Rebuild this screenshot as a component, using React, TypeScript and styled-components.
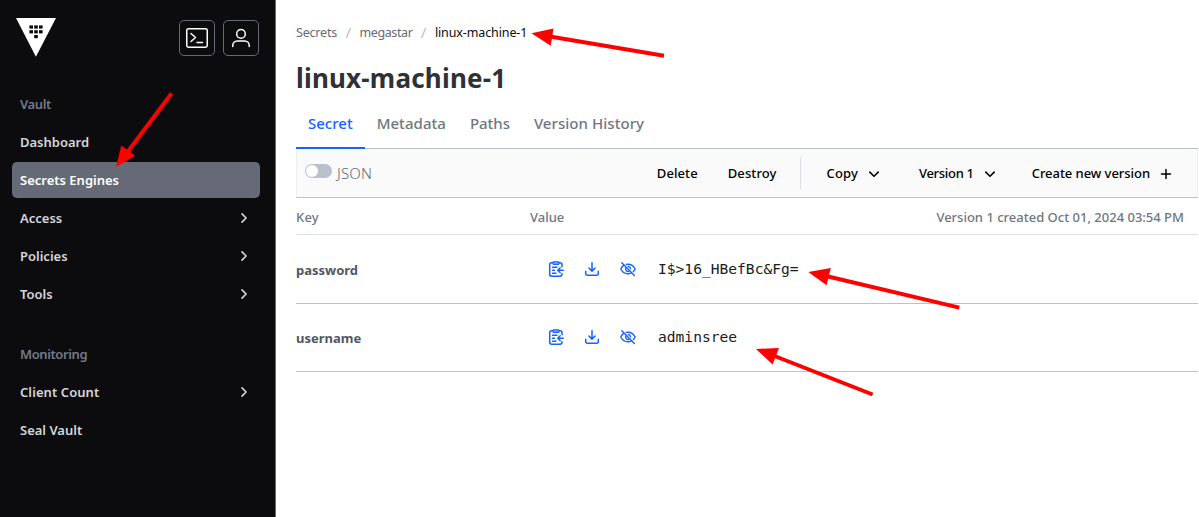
import React from "react";
import styled, { createGlobalStyle } from "styled-components";

const GlobalStyle = createGlobalStyle`
  * { box-sizing: border-box; }
  body {
    margin: 0;
    background: #fff;
    overflow: hidden;
    font-family: "Noto Sans", "Open Sans", sans-serif;
  }
  svg { display: block; flex: none; }
`;

const Page = styled.div`
  display: flex;
  position: relative;
  width: 1199px;
  height: 517px;
  white-space: nowrap;
`;

const Sidebar = styled.nav`
  width: 276px;
  height: 100%;
  padding: 0 15px 0 12px;
  background: #0c0c0e;
  border-right: 1px solid #656a76;
`;

const SidebarHeader = styled.div`
  display: flex;
  align-items: flex-start;
  gap: 8px;
  height: 86px;
  padding: 18px 1px 0 4px;
`;

const Logo = styled.svg`
  margin-right: auto;
`;

const HeaderButton = styled.button`
  display: flex;
  align-items: center;
  justify-content: center;
  width: 36px;
  height: 36px;
  margin-top: 2px;
  padding: 0;
  color: #fff;
  background: transparent;
  border: 1px solid #656a76;
  border-radius: 5px;
`;

const NavGroup = styled.div`
  display: flex;
  flex-direction: column;
  gap: 2px;
  margin-bottom: 24px;
`;

const NavTitle = styled.div`
  height: 36px;
  padding: 0 8px;
  line-height: 36px;
  font-size: 13px;
  font-weight: 600;
  letter-spacing: -0.4px;
  color: #757a86;
`;

const NavItem = styled.a<{ $active?: boolean; $spacing?: number }>`
  display: flex;
  align-items: center;
  justify-content: space-between;
  width: 248px;
  height: 36px;
  padding: 0 8px;
  border-radius: 5px;
  font-size: 13px;
  font-weight: 600;
  letter-spacing: ${(p) => p.$spacing ?? 0}px;
  color: ${(p) => (p.$active ? "#fff" : "#d5d7db")};
  background: ${(p) => (p.$active ? "#656a76" : "transparent")};
`;

const Main = styled.main`
  flex: 1;
  padding: 0 1px 0 20px;
`;

const Breadcrumbs = styled.div`
  display: flex;
  align-items: center;
  height: 20px;
  margin-top: 22px;
  font-size: 12.5px;
  color: #656a76;
`;

const Crumb = styled.span<{ $current?: boolean; $spacing: number }>`
  letter-spacing: ${(p) => p.$spacing}px;
  color: ${(p) => (p.$current ? "#0c0c0e" : "inherit")};
`;

const Slash = styled.span`
  width: 22.5px;
  text-align: center;
  font-size: 15px;
  color: #b8bcc8;
`;

const Title = styled.h1`
  height: 36px;
  margin: 18px 0 0;
  line-height: 36px;
  font-size: 26px;
  font-weight: 700;
  letter-spacing: 0.2px;
  color: #2f3135;
`;

const Tabs = styled.div`
  display: flex;
  height: 53px;
  border-bottom: 1px solid #b8bec9;
`;

const Tab = styled.a<{ $active?: boolean; $spacing: number }>`
  height: 53px;
  padding: 4px 12px 0;
  line-height: 46px;
  font-size: 15px;
  font-weight: 500;
  letter-spacing: ${(p) => p.$spacing}px;
  color: ${(p) => (p.$active ? "#1563ff" : "#6f7682")};
  border-bottom: 2px solid ${(p) => (p.$active ? "#1563ff" : "transparent")};
`;

const Toolbar = styled.div`
  display: flex;
  align-items: center;
  height: 49px;
  padding: 0 23px 0 8px;
  background: #fafafa;
  border: solid #ebeef2;
  border-width: 0 1px;
  border-bottom: 1px solid #bac1cc;
`;

const Switch = styled.span`
  width: 27px;
  height: 14px;
  margin-top: -5px;
  padding: 1px;
  border-radius: 7px;
  background: #bac1cc;
`;

const Knob = styled.span`
  display: block;
  width: 12px;
  height: 12px;
  border-radius: 50%;
  background: #fff;
`;

const SwitchLabel = styled.span`
  margin: -1px auto 0 5px;
  font-size: 15px;
  font-weight: 300;
  letter-spacing: 0.2px;
  color: #656a76;
`;

const Action = styled.button<{ $after: number; $spacing?: number }>`
  display: flex;
  align-items: center;
  gap: 8px;
  margin-right: ${(p) => p.$after}px;
  padding: 0;
  border: 0;
  background: none;
  font: 500 13px "Noto Sans", sans-serif;
  letter-spacing: ${(p) => p.$spacing ?? 0}px;
  color: #000;

  svg { margin-top: 2px; }
`;

const Separator = styled.span`
  width: 1px;
  height: 32px;
  margin-right: 26px;
  background: #dbdee4;
`;

const TableHead = styled.div`
  display: grid;
  grid-template-columns: 234px 1fr auto;
  align-items: center;
  height: 37px;
  padding: 2px 14px 0 0;
  border-bottom: 1px solid #dcdfe6;
  font-size: 13px;
  font-weight: 500;
  color: #6f7682;
`;

const HeadCell = styled.span<{ $spacing?: number }>`
  letter-spacing: ${(p) => p.$spacing ?? 0}px;
`;

const SecretRow = styled.div<{ $height: number }>`
  display: grid;
  grid-template-columns: 252px 110px 1fr;
  align-items: center;
  height: ${(p) => p.$height}px;
  padding-bottom: 1px;
  border-bottom: 1px solid #bac1cc;

  & + & { padding-bottom: 2px; }
`;

const SecretKey = styled.span`
  padding-top: 2px;
  font-size: 13px;
  font-weight: 700;
  color: #525761;
`;

const IconActions = styled.span`
  display: flex;
  gap: 20px;
  color: #1563ff;
`;

const SecretValue = styled.code`
  font: 14.6px "DejaVu Sans Mono", monospace;
  color: #1a1c20;
`;

const Annotations = styled.svg`
  position: absolute;
  inset: 0;
  pointer-events: none;
`;

const Chevron = ({ down = false }: { down?: boolean }) => (
  <svg width="16" height="16" viewBox="0 0 16 16" fill="none" stroke="currentColor" strokeWidth="1.6" strokeLinecap="round" strokeLinejoin="round">
    <path d={down ? "M3.800 6.100l4.200 4.200 4.200-4.200" : "M6 3.900L10.100 8 6 12.100"} />
  </svg>
);

const Plus = () => (
  <svg width="16" height="16" viewBox="0 0 16 16" fill="none" stroke="currentColor" strokeWidth="1.5" strokeLinecap="round">
    <path d="M8 3.500v9M3.500 8h9" />
  </svg>
);

const TerminalIcon = () => (
  <svg width="24" height="24" viewBox="0 0 24 24" fill="none" stroke="currentColor" strokeWidth="1.5" strokeLinecap="round" strokeLinejoin="round">
    <rect x="1.75" y="2.75" width="20.5" height="18.5" rx="1.7" />
    <path d="M6 7.5l4.500 4L6 15.500M12 16.500h5.500" />
  </svg>
);

const UserIcon = () => (
  <svg width="24" height="24" viewBox="0 0 24 24" fill="none" stroke="currentColor" strokeWidth="1.5" strokeLinecap="round">
    <circle cx="12" cy="7.9" r="4.3" />
    <path d="M3.750 20.500v-1A4.500 4.500 0 0 1 8.250 15h7.500a4.500 4.500 0 0 1 4.500 4.500v1" />
  </svg>
);

const ClipboardIcon = () => (
  <svg width="16" height="16" viewBox="0 0 16 16" fill="none" stroke="currentColor" strokeWidth="1.5" strokeLinecap="round" strokeLinejoin="round">
    <path d="M4.500 1.800H3.600A1.900 1.900 0 0 0 1.700 3.700v9.600A1.900 1.900 0 0 0 3.600 15.200h8.500a1.900 1.900 0 0 0 1.900-1.900v-.6M11.300 1.800h.8A1.900 1.900 0 0 1 14 3.700v2.100" />
    <rect x="4.900" y=".8" width="6.200" height="2.600" rx=".8" fill="#8db3ff" strokeWidth="1.200" />
    <path d="M4.500 6.300H9M4.500 9.200h2M4.500 12.200H8M15.300 9.300H9.900M12.200 6.800L9.700 9.300l2.500 2.500" strokeWidth="1.400" />
  </svg>
);

const DownloadIcon = () => (
  <svg width="16" height="16" viewBox="0 0 16 16" fill="none" stroke="currentColor" strokeWidth="1.5" strokeLinecap="round" strokeLinejoin="round">
    <path d="M8 1.800v8.100M4.900 7l3.100 3.100L11.100 7M1.700 10.300v2.400a1.600 1.600 0 0 0 1.600 1.600h9.400a1.600 1.600 0 0 0 1.600-1.600v-2.400" />
  </svg>
);

const EyeOffIcon = () => (
  <svg width="16" height="16" viewBox="0 0 16 16" fill="none" stroke="currentColor" strokeWidth="1.4" strokeLinecap="round" strokeLinejoin="round">
    <path d="M1.800 1.800l12.600 12.600" />
    <path d="M6.200 3.400A7 7 0 0 1 8 3.200c3.300 0 5.700 1.900 7.200 4.800a9 9 0 0 1-1.900 2.500M3.600 4.400A9.600 9.600 0 0 0 .8 8c1.500 2.900 3.900 4.800 7.200 4.800a6.800 6.800 0 0 0 3.300-.8" />
    <path d="M5.800 7A2.500 2.500 0 0 0 9 10.300M8.300 5.500A2.500 2.500 0 0 1 10.500 7.800" />
  </svg>
);

const LOGO_DOTS = [
  [14, 8], [18.8, 8], [23.6, 8],
  [14, 12.8], [18.8, 12.8], [23.6, 12.8],
  [18.8, 17.6],
];

const VaultLogo = () => (
  <Logo width="40" height="39" viewBox="0 0 40 39">
    <path d="M0 0h40L19.900 38.800z" fill="#fff" />
    {LOGO_DOTS.map(([x, y]) => (
      <rect key={`${x}-${y}`} x={x - 0.6} y={y - 0.6} width="3.600" height="3.200" fill="#0c0c0e" />
    ))}
  </Logo>
);

const ARROWS = [
  { line: "M664 55.800L550 36.500", head: "531.500,33.300 553.500,28.500 550.700,45.700" },
  { line: "M171.500 93.500L126 154", head: "116,167 121.300,145.500 135.200,155.700" },
  { line: "M959.300 307.600L826 276", head: "808.300,272 830.800,268 826.600,285.200" },
  { line: "M872.600 394.500L772 355", head: "756,348.900 779,348 772.600,364.600" },
];

const SECRETS = [
  { key: "password", value: "I$>16_HBefBc&Fg=", height: 69 },
  { key: "username", value: "adminsree", height: 68 },
];

export default function App() {
  return (
    <>
      <GlobalStyle />
      <Page>
        <Sidebar>
          <SidebarHeader>
            <VaultLogo />
            <HeaderButton aria-label="Console"><TerminalIcon /></HeaderButton>
            <HeaderButton aria-label="User menu"><UserIcon /></HeaderButton>
          </SidebarHeader>
          <NavGroup>
            <NavTitle>Vault</NavTitle>
            <NavItem>Dashboard</NavItem>
            <NavItem $active>Secrets Engines</NavItem>
            <NavItem>Access<Chevron /></NavItem>
            <NavItem>Policies<Chevron /></NavItem>
            <NavItem>Tools<Chevron /></NavItem>
          </NavGroup>
          <NavGroup>
            <NavTitle>Monitoring</NavTitle>
            <NavItem $spacing={0.08}>Client Count<Chevron /></NavItem>
            <NavItem>Seal Vault</NavItem>
          </NavGroup>
        </Sidebar>
        <Main>
          <Breadcrumbs>
            <Crumb $spacing={-0.2}>Secrets</Crumb>
            <Slash>/</Slash>
            <Crumb $spacing={-0.4}>megastar</Crumb>
            <Slash>/</Slash>
            <Crumb $current $spacing={-0.12}>linux-machine-1</Crumb>
          </Breadcrumbs>
          <Title>linux-machine-1</Title>
          <Tabs>
            <Tab $active $spacing={0}>Secret</Tab>
            <Tab $spacing={0.05}>Metadata</Tab>
            <Tab $spacing={-0.05}>Paths</Tab>
            <Tab $spacing={0.05}>Version History</Tab>
          </Tabs>
          <Toolbar>
            <Switch><Knob /></Switch>
            <SwitchLabel>JSON</SwitchLabel>
            <Action $after={30} $spacing={0.1}>Delete</Action>
            <Action $after={23} $spacing={0.1}>Destroy</Action>
            <Separator />
            <Action $after={37} $spacing={0.15}>Copy<Chevron down /></Action>
            <Action $after={34} $spacing={-0.3}>Version 1<Chevron down /></Action>
            <Action $after={0} $spacing={-0.05}>Create new version<Plus /></Action>
          </Toolbar>
          <TableHead>
            <HeadCell $spacing={0.2}>Key</HeadCell>
            <HeadCell>Value</HeadCell>
            <HeadCell>Version 1 created Oct 01, 2024 03:54 PM</HeadCell>
          </TableHead>
          {SECRETS.map((s) => (
            <SecretRow key={s.key} $height={s.height}>
              <SecretKey>{s.key}</SecretKey>
              <IconActions>
                <ClipboardIcon />
                <DownloadIcon />
                <EyeOffIcon />
              </IconActions>
              <SecretValue>{s.value}</SecretValue>
            </SecretRow>
          ))}
        </Main>
        <Annotations width="1199" height="517" viewBox="0 0 1199 517" fill="none">
          {ARROWS.map((a) => (
            <g key={a.head}>
              <path d={a.line} stroke="#f00" strokeWidth="4" />
              <polygon points={a.head} fill="#f00" />
            </g>
          ))}
        </Annotations>
      </Page>
    </>
  );
}
